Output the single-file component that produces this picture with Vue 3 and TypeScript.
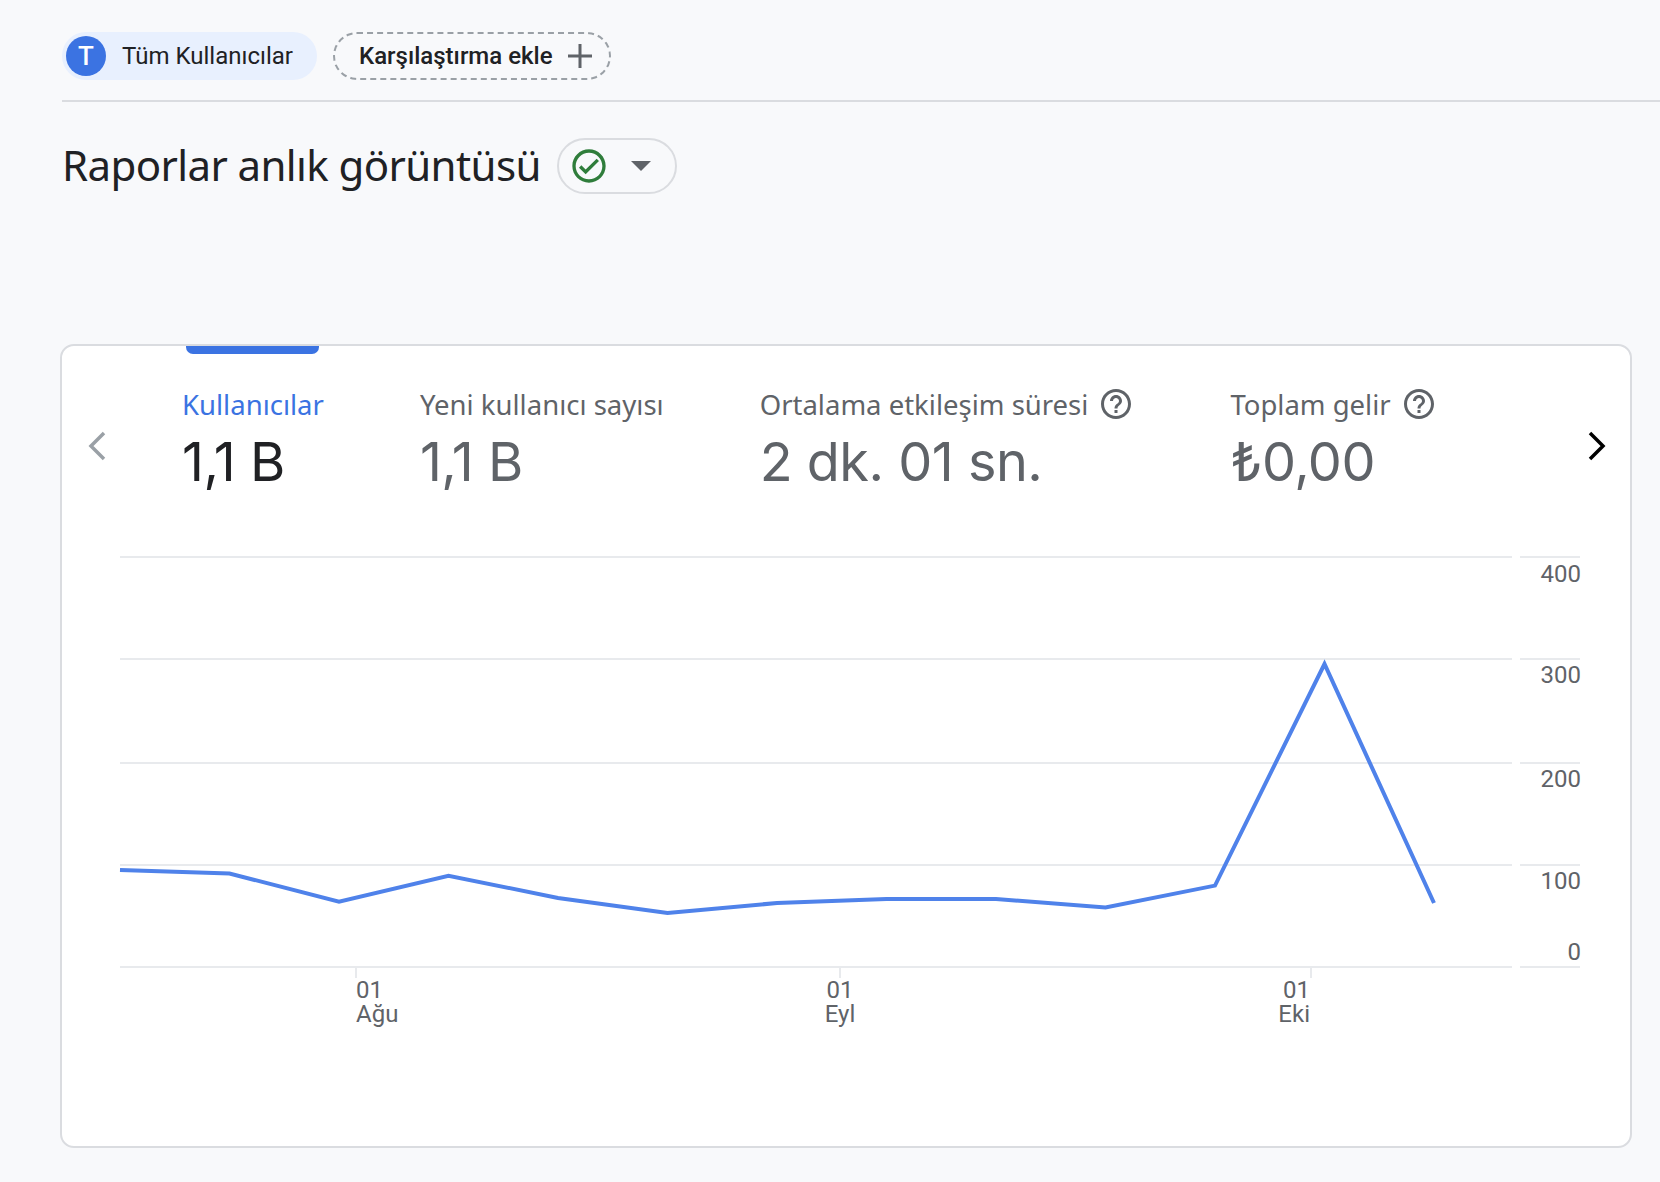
<template>
  <div class="page">
    <div class="chip-row">
      <div class="segment-chip">
        <span class="avatar">T</span>
        <span class="segment-name">Tüm Kullanıcılar</span>
      </div>
      <button class="compare-chip">
        <span>Karşılaştırma ekle</span>
        <svg class="plus" viewBox="0 0 24 24"><path d="M12 0v24M0 12h24" /></svg>
      </button>
    </div>

    <div class="title-row">
      <h1 class="title">Raporlar anlık görüntüsü</h1>
      <button class="status-pill">
        <svg class="check" viewBox="0 0 24 24">
          <path d="M12 2C6.48 2 2 6.48 2 12s4.48 10 10 10 10-4.48 10-10S17.52 2 12 2zm0 18c-4.41 0-8-3.59-8-8s3.59-8 8-8 8 3.59 8 8-3.59 8-8 8zm4.59-12.42L10 14.17l-2.59-2.58L6 13l4 4 8-8z" />
        </svg>
        <span class="caret"></span>
      </button>
    </div>

    <section class="card">
      <div class="tabs-row">
        <svg class="nav" viewBox="0 0 18 30"><path class="nav-prev" d="M16 2 3 15l13 13" /></svg>
        <div class="tabs">
          <div v-for="(m, i) in metrics" :key="m.label" class="tab" :class="{ active: i === 0 }">
            <span v-if="i === 0" class="indicator"></span>
            <div class="tab-label">
              {{ m.label }}
              <svg v-if="m.help" class="help" viewBox="0 0 24 24">
                <path d="M11 18h2v-2h-2v2zm1-16C6.48 2 2 6.48 2 12s4.48 10 10 10 10-4.48 10-10S17.52 2 12 2zm0 18c-4.41 0-8-3.59-8-8s3.59-8 8-8 8 3.59 8 8-3.59 8-8 8zm0-14c-2.21 0-4 1.79-4 4h2c0-1.1.9-2 2-2s2 .9 2 2c0 2-3 1.75-3 5h2c0-2.25 3-2.5 3-5 0-2.21-1.79-4-4-4z" />
              </svg>
            </div>
            <div class="tab-value">{{ m.value }}</div>
          </div>
        </div>
        <svg class="nav" viewBox="0 0 18 30"><path class="nav-next" d="M2 2l13 13L2 28" /></svg>
      </div>

      <svg class="chart" viewBox="0 0 1570 560" width="1570" height="560">
        <g v-for="y in gridYs" :key="y" class="grid">
          <line x1="58" :y1="y" x2="1450" :y2="y" />
          <line x1="1458" :y1="y" x2="1518" :y2="y" />
        </g>
        <text v-for="l in yLabels" :key="l.text" class="axis" x="1519" :y="l.y" text-anchor="end">{{ l.text }}</text>
        <g v-for="t in xTicks" :key="t.month">
          <line class="tick" :x1="t.x" y1="410" :x2="t.x" y2="421" />
          <text class="axis" :x="t.x + t.dx" y="441" :text-anchor="t.anchor">01</text>
          <text class="axis" :x="t.x + t.dx" y="465" :text-anchor="t.anchor">{{ t.month }}</text>
        </g>
        <polyline class="series" :points="points" />
      </svg>
    </section>
  </div>
</template>

<script setup lang="ts">
const metrics = [
  { label: "Kullanıcılar", value: "1,1 B", help: false },
  { label: "Yeni kullanıcı sayısı", value: "1,1 B", help: false },
  { label: "Ortalama etkileşim süresi", value: "2 dk. 01 sn.", help: true },
  { label: "Toplam gelir", value: "₺0,00", help: true },
];

// chart coordinates, origin is the top left of the svg
const gridYs = [0, 102, 206, 308, 410];

const yLabels = [
  { text: "400", y: 25 },
  { text: "300", y: 126 },
  { text: "200", y: 230 },
  { text: "100", y: 332 },
  { text: "0", y: 403 },
];

const xTicks = [
  { month: "Ağu", x: 294, dx: 0, anchor: "start" },
  { month: "Eyl", x: 778, dx: 0, anchor: "middle" },
  { month: "Eki", x: 1249, dx: -1, anchor: "end" },
];

const values = [313, 316.5, 344.7, 318.7, 341, 356, 346, 342, 342, 350.5, 328.6, 107, 346];
const points = values.map((y, i) => `${58 + i * 109.5},${y}`).join(" ");
</script>

<style>
body {
  background: #f8f9fb;
}
</style>

<style scoped>
.page {
  height: 1182px;
  box-sizing: border-box;
  padding: 32px 29px 0 62px;
  font-family: Roboto, "Liberation Sans", sans-serif;
  overflow: hidden;
}

.chip-row {
  display: flex;
  align-items: flex-start;
  gap: 16px;
  height: 70px;
  box-sizing: border-box;
  border-bottom: 2px solid #dadce0;
  margin-right: -29px;
}

.segment-chip {
  display: flex;
  align-items: center;
  width: 255px;
  height: 48px;
  box-sizing: border-box;
  padding-left: 4px;
  gap: 16px;
  background: #e8f0fe;
  border-radius: 24px;
}

.avatar {
  width: 40px;
  height: 40px;
  border-radius: 50%;
  background: #3b73e2;
  color: #fff;
  font-size: 26px;
  font-weight: 500;
  line-height: 40px;
  text-align: center;
}

.segment-name {
  font-size: 24px;
  color: #202124;
}

.compare-chip {
  display: flex;
  align-items: center;
  gap: 15px;
  width: 278px;
  height: 48px;
  box-sizing: border-box;
  padding: 0 0 0 24px;
  background: none;
  border: 2px dashed #9aa0a6;
  border-radius: 24px;
  font-family: inherit;
  font-size: 24px;
  font-weight: 500;
  color: #202124;
}

.plus {
  width: 24px;
  height: 24px;
  fill: none;
  stroke: #5f6368;
  stroke-width: 3;
}

.title-row {
  display: flex;
  align-items: center;
  gap: 16px;
  margin-top: 34px;
}

.title {
  margin: 0;
  font-family: "Noto Sans", sans-serif;
  font-size: 42px;
  font-weight: 400;
  letter-spacing: -0.6px;
  line-height: 56px;
  color: #202124;
}

.status-pill {
  display: flex;
  align-items: center;
  width: 120px;
  height: 56px;
  margin-top: 2px;
  box-sizing: border-box;
  padding: 0 0 0 10px;
  gap: 22px;
  background: none;
  border: 2px solid #dadce0;
  border-radius: 28px;
}

.check {
  width: 40px;
  height: 40px;
  fill: #2f7d3b;
}

.caret {
  border-left: 10px solid transparent;
  border-right: 10px solid transparent;
  border-top: 10px solid #5f6368;
}

.card {
  margin: 150px -1px 0 -2px;
  height: 804px;
  box-sizing: border-box;
  background: #fff;
  border: 2px solid #dadce0;
  border-radius: 14px;
}

.tabs-row {
  display: flex;
  align-items: center;
  height: 211px;
  padding: 0 24px 0 26px;
  justify-content: space-between;
}

.nav {
  width: 18px;
  height: 30px;
  fill: none;
  stroke-width: 3.5;
  margin-top: -12px;
}

.nav-prev {
  stroke: #9aa0a6;
}

.nav-next {
  stroke: #000;
}

.tabs {
  display: flex;
  gap: 96px;
  flex: 1;
  height: 100%;
  padding-left: 76px;
}

.tab {
  position: relative;
  padding-top: 41px;
  color: #5f6368;
}

.indicator {
  position: absolute;
  top: 0;
  left: 4px;
  right: 5px;
  height: 8px;
  background: #3b73e2;
  border-radius: 0 0 7px 7px;
}

.tab-label {
  display: flex;
  align-items: center;
  gap: 10px;
  height: 34px;
  font-family: "Noto Sans", sans-serif;
  font-size: 27.5px;
  white-space: nowrap;
}

.tab-value {
  margin-top: 9px;
  font-family: Inter, Roboto, sans-serif;
  font-size: 54px;
  font-weight: 400;
  letter-spacing: -0.5px;
  line-height: 64px;
  white-space: nowrap;
}

.tab.active .tab-label {
  color: #3b73e2;
}

.tab.active .tab-value {
  color: #202124;
}

.help {
  width: 36px;
  height: 36px;
  fill: #5f6368;
}

.chart {
  display: block;
  overflow: visible;
}

.grid line {
  stroke: #e8eaed;
  stroke-width: 2;
}

.tick {
  stroke: #e8eaed;
  stroke-width: 2;
}

.axis {
  font-size: 24px;
  fill: #5f6368;
}

.series {
  fill: none;
  stroke: #4f82ea;
  stroke-width: 4;
  stroke-linejoin: miter;
}
</style>
